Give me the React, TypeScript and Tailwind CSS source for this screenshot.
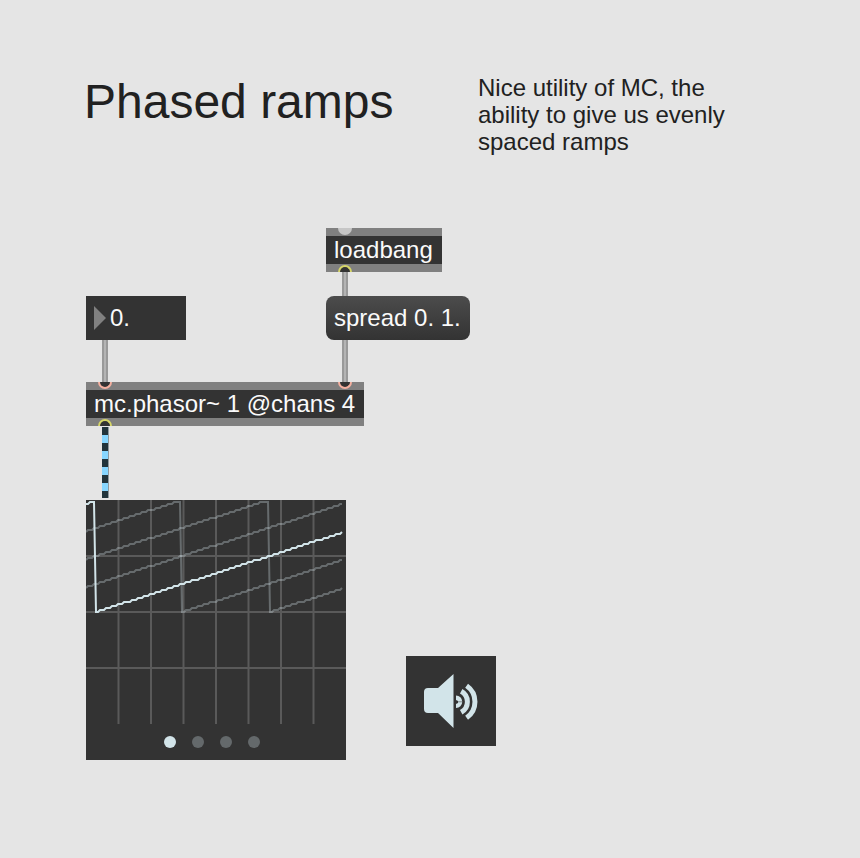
import React, { useState } from "react";

const RAMP_TOP = 2;
const RAMP_BOTTOM = 112;
const SLOPE = 0.323;

// One ramp per channel: its height at the left edge, and where it wraps.
const channels = [
  { start: 4, wrap: 8 },
  { start: 31, wrap: 94 },
  { start: 59, wrap: 182 },
  { start: 87, wrap: null },
];

function rampPoints({ start, wrap }: { start: number; wrap: number | null }) {
  const points: string[] = [];
  const snap = (v: number) => Math.max(RAMP_TOP, Math.round(v / 2) * 2);
  const end = wrap ?? 256;
  for (let x = 0; x <= end; x += 2) {
    points.push(`${x},${snap(start - x * SLOPE)}`);
  }
  if (wrap !== null) {
    for (let x = wrap + 2; x <= 256; x += 2) {
      points.push(`${x},${snap(RAMP_BOTTOM - (x - wrap - 2) * SLOPE)}`);
    }
  }
  return points.join(" ");
}

function Cable({ className }: { className: string }) {
  return (
    <div
      className={`absolute w-[6px] border-x-2 border-[#999999] bg-[#b4b4b4] ${className}`}
    />
  );
}

function Port({ className }: { className: string }) {
  return (
    <span className={`absolute h-[7px] w-[14px] overflow-hidden ${className}`} />
  );
}

function ObjectBox({
  label,
  className,
  children,
}: {
  label: string;
  className: string;
  children: React.ReactNode;
}) {
  return (
    <div
      className={`absolute h-11 border-y-8 border-[#808080] bg-[#333333] px-2 text-2xl/7 whitespace-nowrap text-[#fafafa] ${className}`}
    >
      {label}
      {children}
    </div>
  );
}

function Scope() {
  const [active, setActive] = useState(0);
  return (
    <section aria-label="Scope" className="w-[260px] bg-[#333333]">
      <svg viewBox="0 0 260 224" className="block w-full" fill="none">
        <g stroke="#5a5a5a" strokeWidth="2">
          {[1, 2, 3, 4, 5, 6, 7].map((n) => (
            <path key={n} d={`M${n * 32.5} 0V224`} />
          ))}
          {[56, 112, 168].map((y) => (
            <path key={y} d={`M0 ${y}H260`} />
          ))}
        </g>
        {channels.map((channel, i) =>
          i === active ? null : (
            <polyline
              key={i}
              points={rampPoints(channel)}
              stroke="#d2e4e9"
              strokeOpacity="0.32"
              strokeWidth="2"
            />
          ),
        )}
        <polyline
          points={rampPoints(channels[active])}
          stroke="#d2e4e9"
          strokeWidth="2"
        />
      </svg>
      <div className="flex h-9 items-center gap-4 pl-[78px]">
        {channels.map((_, i) => (
          <button
            key={i}
            type="button"
            aria-label={`Channel ${i + 1}`}
            aria-pressed={i === active}
            onClick={() => setActive(i)}
            className={`size-3 rounded-full ${i === active ? "bg-[#d2e4e9]" : "bg-[#64696b]"}`}
          />
        ))}
      </div>
    </section>
  );
}

function AudioToggle() {
  return (
    <button
      type="button"
      aria-label="Toggle audio"
      className="size-[90px] bg-[#333333]"
    >
      <svg viewBox="0 0 90 90" className="size-full" fill="none">
        <path
          d="M22 32H32L47.500 18V72L32 57H22Q18 57 18 53V36Q18 32 22 32Z"
          fill="#d2e4e9"
        />
        <path
          d="M50 39.500A6.200 6.200 0 0 1 50 52V48L52 47V45L50 44Z"
          fill="#d2e4e9"
        />
        <path d="M52 45.800H56" stroke="#333333" strokeWidth="0.5" />
        <g stroke="#d2e4e9" strokeWidth="5">
          <path d="M55.200 35.300A12 12 0 0 1 55.200 56.300" />
          <path d="M60.600 29.800A19.500 19.500 0 0 1 60.600 61.800" />
        </g>
      </svg>
    </button>
  );
}

export default function App() {
  const [value, setValue] = useState("0.");
  return (
    <main className="min-h-screen bg-[#e5e5e5] font-['Liberation_Sans',Arial,sans-serif] text-[#212121]">
      <header className="flex items-start gap-[84px] pt-[74px] pl-[84px]">
        <h1 className="w-[310px] shrink-0 text-5xl/14 whitespace-nowrap">
          Phased ramps
        </h1>
        <p className="max-w-[260px] text-2xl/[27px]">
          Nice utility of MC, the ability to give us evenly spaced ramps
        </p>
      </header>

      <div className="relative mt-[73px] h-[272px]">
        <Cable className="top-[44px] left-[342px] h-6" />
        <Cable className="top-[112px] left-[342px] h-[42px]" />
        <Cable className="top-[112px] left-[102px] h-[42px]" />
        <div className="absolute top-[199px] left-[102px] h-[71px] w-[7px] border-r border-[#8f999e] bg-[repeating-linear-gradient(#22343c_0px_8px,#87d6ff_8px_16px)]" />

        <ObjectBox label="loadbang" className="top-0 left-[326px] w-[116px]">
          <Port className="-top-2 left-3 rounded-b-full bg-[#c6c6c6]" />
          <Port className="-bottom-2 left-3 rounded-t-full border-2 border-b-0 border-[#d6d668] bg-[#333333]" />
        </ObjectBox>

        <label className="absolute top-[68px] left-[86px] flex h-11 w-[100px] items-center gap-1 bg-[#333333] pl-2">
          <svg viewBox="0 0 12 24" className="h-6 w-3 shrink-0" aria-hidden="true">
            <path d="M0 0L12 12L0 24Z" fill="#808080" />
          </svg>
          <input
            aria-label="Frequency"
            value={value}
            onChange={(e) => setValue(e.target.value)}
            className="w-16 bg-transparent text-2xl/7 text-[#fafafa] outline-none"
          />
        </label>

        <button
          type="button"
          className="absolute top-[68px] left-[326px] h-11 w-36 rounded-lg bg-linear-to-b from-[#4c4c4c] to-[#333333] px-2 text-left text-2xl/7 whitespace-nowrap text-[#fafafa]"
        >
          spread 0. 1.
        </button>

        <ObjectBox
          label="mc.phasor~ 1 @chans 4"
          className="top-[154px] left-[86px] w-[278px]"
        >
          <Port className="-top-2 left-3 rounded-b-full border-2 border-t-0 border-[#f5b0a0] bg-[#333333]" />
          <Port className="-top-2 left-[252px] rounded-b-full border-2 border-t-0 border-[#f5b0a0] bg-[#333333]" />
          <Port className="-bottom-2 left-3 rounded-t-full border-2 border-b-0 border-[#d6d668] bg-[#333333]" />
        </ObjectBox>
      </div>

      <div className="flex items-start gap-[60px] pl-[86px]">
        <Scope />
        <div className="pt-[156px]">
          <AudioToggle />
        </div>
      </div>
    </main>
  );
}
